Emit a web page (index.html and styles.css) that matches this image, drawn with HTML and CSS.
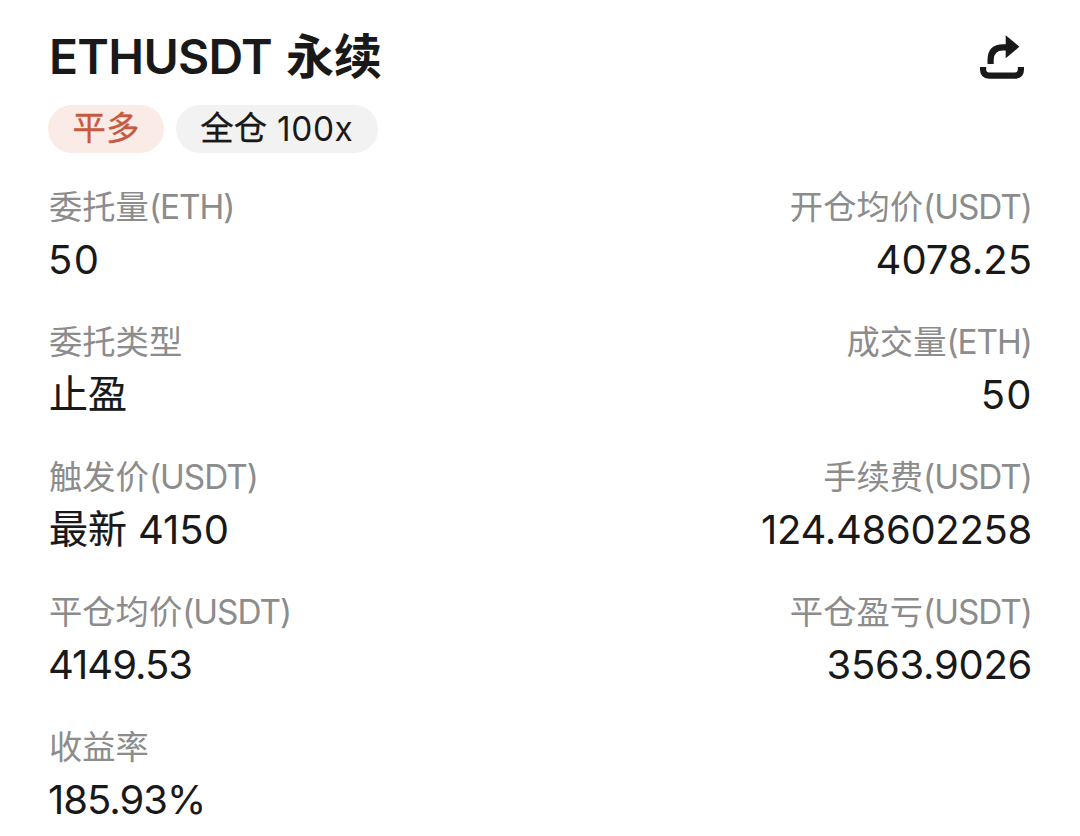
FILE: index.html
```html
<!DOCTYPE html>
<html lang="zh-CN">
  <head>
    <meta charset="UTF-8" />
    <title>ETHUSDT 永续</title>
    <link rel="stylesheet" href="styles.css">
  </head>
  <body>
    <header class="header">
      <h1><span class="symbol">ETHUSDT</span><span class="kind">永续</span></h1>
      <button class="share" aria-label="分享">
        <svg width="46" height="44" viewBox="0 0 46 44" fill="none" stroke="currentColor" stroke-width="6.2">
          <path d="M3.1 32v2.6q0 6 6 6h25.8q6 0 6-6V32" />
          <path d="M10.6 29v-4q0-12.6 12.6-12.6H27" />
          <path d="M25.7 0.3l13.7 11.4-13.7 11.6z" fill="currentColor" stroke="none" />
        </svg>
      </button>
    </header>

    <div class="tags">
      <span class="tag tag-close">平多</span>
      <span class="tag tag-margin">全仓<span class="leverage">100x</span></span>
    </div>

    <dl class="details">
      <div class="item">
        <dt>委托量<span class="unit">(ETH)</span></dt>
        <dd><span class="num wide">50</span></dd>
      </div>
      <div class="item">
        <dt>开仓均价<span class="unit">(USDT)</span></dt>
        <dd><span class="num">4078.25</span></dd>
      </div>
      <div class="item">
        <dt>委托类型</dt>
        <dd>止盈</dd>
      </div>
      <div class="item">
        <dt>成交量<span class="unit">(ETH)</span></dt>
        <dd><span class="num wide">50</span></dd>
      </div>
      <div class="item">
        <dt>触发价<span class="unit">(USDT)</span></dt>
        <dd>最新 <span class="num">4150</span></dd>
      </div>
      <div class="item">
        <dt>手续费<span class="unit">(USDT)</span></dt>
        <dd><span class="num snug">124.48602258</span></dd>
      </div>
      <div class="item">
        <dt>平仓均价<span class="unit">(USDT)</span></dt>
        <dd><span class="num tight">4149.53</span></dd>
      </div>
      <div class="item">
        <dt>平仓盈亏<span class="unit">(USDT)</span></dt>
        <dd><span class="num snug">3563.9026</span></dd>
      </div>
      <div class="item">
        <dt>收益率</dt>
        <dd><span class="num tight">185.93%</span></dd>
      </div>
    </dl>
  </body>
</html>
```

FILE: styles.css
```css
* {
  box-sizing: border-box;
}

body {
  margin: 0;
  padding: 28px 48px 0 49px;
  height: 836px;
  overflow: hidden;
  font-family: "Inter", "Noto Sans CJK SC", sans-serif;
  background-color: #fff;
  color: #191919;
}

.header {
  display: flex;
  justify-content: space-between;
  height: 60px;
}

h1 {
  display: flex;
  gap: 14px;
  margin: 0;
  font-size: 48px;
  font-weight: 600;
  line-height: 58px;
}

.symbol {
  letter-spacing: -0.7px;
}

.kind {
  font-weight: 700;
}

.share {
  width: 46px;
  height: 44px;
  margin: 7px 6px 0 0;
  padding: 0;
  border: 0;
  background: none;
  color: #191919;
}

.share svg {
  display: block;
}

.tags {
  display: flex;
  gap: 12px;
  margin: 17px 0 0 -1px;
}

.tag {
  height: 48px;
  padding: 0 24.5px;
  border-radius: 24px;
  font-size: 33.4px;
  font-weight: 400;
  line-height: 46px;
  -webkit-text-stroke: 0.3px currentColor;
}

.tag-close {
  background-color: #fbebe7;
  color: #c65a40;
}

.tag-margin {
  background-color: #f2f2f2;
}

.leverage {
  display: inline-block;
  margin-left: 10px;
  letter-spacing: 0.6px;
  vertical-align: -1px;
  -webkit-text-stroke: 0;
}

.details {
  display: grid;
  grid-template-columns: 1fr 1fr;
  margin: 30px 0 0;
}

.item {
  height: 135px;
}

.item:nth-child(even) {
  text-align: right;
}

dt {
  height: 48px;
  font-size: 33.3px;
  line-height: 48px;
  color: #8c8c8c;
  white-space: nowrap;
}

.unit {
  letter-spacing: -1px;
}

dd {
  height: 56px;
  margin: 0;
  font-size: 39px;
  line-height: 56px;
  white-space: nowrap;
  -webkit-text-stroke: 0.2px currentColor;
}

.num {
  display: inline-block;
  font-size: 40px;
  vertical-align: -1px;
  -webkit-text-stroke: 0;
}

.wide {
  margin: 0 -1px;
  letter-spacing: 1.4px;
}

.snug {
  letter-spacing: -0.3px;
}

.tight {
  margin-left: -1px;
  letter-spacing: -1px;
}
```
